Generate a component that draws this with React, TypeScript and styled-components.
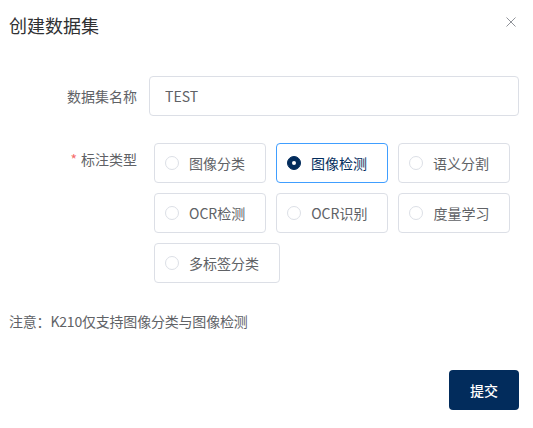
import { useState } from "react";
import styled, { createGlobalStyle } from "styled-components";

const GlobalStyle = createGlobalStyle`
  html, body {
    margin: 0;
    padding: 0;
    background: #fff;
  }

  body {
    font-family: "Noto Sans CJK SC", "Noto Sans", sans-serif;
    color: #606266;
  }
`;

const Dialog = styled.div`
  width: 533px;
  height: 428px;
  box-sizing: border-box;
  padding: 0 14px 0 9px;
  display: flex;
  flex-direction: column;
`;

const Header = styled.div`
  height: 50px;
  display: flex;
  align-items: center;
  justify-content: space-between;
`;

const Title = styled.h2`
  margin: 0;
  font-size: 18px;
  font-weight: 400;
  line-height: 24px;
  color: #303133;
`;

const CloseButton = styled.button`
  border: none;
  background: none;
  padding: 0;
  width: 16px;
  height: 16px;
  margin-top: -6px;
  display: flex;
  align-items: center;
  justify-content: center;
  cursor: pointer;
  color: #909399;
`;

const Form = styled.form`
  margin-top: 26px;
  display: flex;
  flex-direction: column;
  gap: 27px;
`;

const FormItem = styled.div`
  display: flex;
  align-items: flex-start;
`;

const Label = styled.label<{ $tall?: boolean }>`
  width: 140px;
  flex-shrink: 0;
  box-sizing: border-box;
  padding-right: 12px;
  text-align: right;
  font-size: 14px;
  line-height: ${props => (props.$tall ? "32px" : "40px")};
  color: #606266;
`;

const Required = styled.span`
  color: #f56c6c;
  margin-right: 4px;
`;

const Input = styled.input`
  flex: 1;
  height: 40px;
  box-sizing: border-box;
  padding: 0 15px;
  border: 1px solid #dcdfe6;
  border-radius: 4px;
  font-family: inherit;
  font-size: 14px;
  color: #606266;
  outline: none;
`;

const RadioGroup = styled.div`
  flex: 1;
  display: flex;
  flex-wrap: wrap;
  gap: 10px;
  padding-left: 5px;
`;

const RadioBox = styled.label<{ $checked: boolean }>`
  height: 40px;
  box-sizing: border-box;
  padding: 0 20px 0 10px;
  display: flex;
  align-items: center;
  border: 1px solid ${props => (props.$checked ? "#409eff" : "#dcdfe6")};
  border-radius: 4px;
  font-size: 14px;
  color: ${props => (props.$checked ? "#022c5c" : "#606266")};
  cursor: pointer;
  white-space: nowrap;
`;

const RadioDot = styled.span<{ $checked: boolean }>`
  width: 14px;
  height: 14px;
  box-sizing: border-box;
  border-radius: 50%;
  border: 1px solid ${props => (props.$checked ? "#022c5c" : "#dcdfe6")};
  background: ${props => (props.$checked ? "#022c5c" : "#fff")};
  display: flex;
  align-items: center;
  justify-content: center;
  margin-right: 10px;

  &::after {
    content: "";
    width: 4px;
    height: 4px;
    border-radius: 50%;
    background: #fff;
    display: ${props => (props.$checked ? "block" : "none")};
  }
`;

const Note = styled.p`
  margin: 28px 0 0;
  font-size: 14px;
  line-height: 20px;
  letter-spacing: -0.2px;
  color: #606266;
`;

const Footer = styled.div`
  margin-top: 39px;
  display: flex;
  justify-content: flex-end;
`;

const SubmitButton = styled.button`
  width: 70px;
  height: 40px;
  border: none;
  border-radius: 4px;
  background: #022c5c;
  color: #fff;
  font-family: inherit;
  font-size: 14px;
  font-weight: 500;
  cursor: pointer;
`;

const types = [
  "图像分类",
  "图像检测",
  "语义分割",
  "OCR检测",
  "OCR识别",
  "度量学习",
  "多标签分类",
];

export default function App() {
  const [name, setName] = useState("TEST");
  const [type, setType] = useState("图像检测");

  return (
    <>
      <GlobalStyle />
      <Dialog>
        <Header>
          <Title>创建数据集</Title>
          <CloseButton type="button" aria-label="close">
            <svg width="10" height="10" viewBox="0 0 10 10">
              <path d="M0.5 0.5L9.5 9.5M9.5 0.5L0.5 9.5" stroke="currentColor" strokeWidth="1" />
            </svg>
          </CloseButton>
        </Header>

        <Form onSubmit={e => e.preventDefault()}>
          <FormItem>
            <Label>数据集名称</Label>
            <Input value={name} onChange={e => setName(e.target.value)} />
          </FormItem>

          <FormItem>
            <Label $tall>
              <Required>*</Required>
              标注类型
            </Label>
            <RadioGroup>
              {types.map(t => (
                <RadioBox key={t} $checked={type === t} onClick={() => setType(t)}>
                  <RadioDot $checked={type === t} />
                  {t}
                </RadioBox>
              ))}
            </RadioGroup>
          </FormItem>
        </Form>

        <Note>注意：K210仅支持图像分类与图像检测</Note>

        <Footer>
          <SubmitButton type="button">提交</SubmitButton>
        </Footer>
      </Dialog>
    </>
  );
}
